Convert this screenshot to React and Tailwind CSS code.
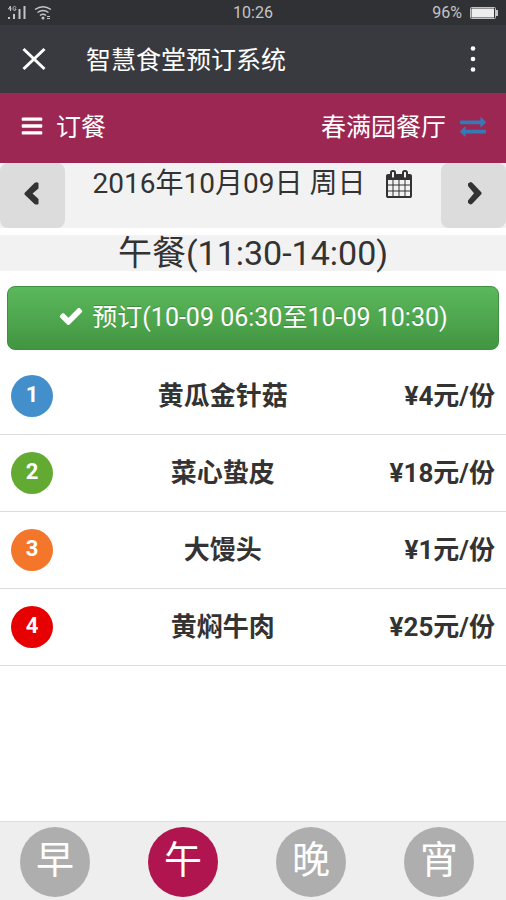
import React from "react";

const DISHES = [
  { name: "黄瓜金针菇", price: 4, badge: "bg-[#428fcc]" },
  { name: "菜心蛰皮", price: 18, badge: "bg-[#63aa33]" },
  { name: "大馒头", price: 1, badge: "bg-[#f4762a]" },
  { name: "黄焖牛肉", price: 25, badge: "bg-[#e60000]" },
];

const MEALS = ["早", "午", "晚", "宵"];

function Icon({ d, className }) {
  return (
    <svg viewBox="0 0 1792 1792" fill="currentColor" aria-hidden="true" className={className}>
      <path d={d} />
    </svg>
  );
}

const BARS =
  "M1664 1344v128q0 26-19 45t-45 19H192q-26 0-45-19t-19-45v-128q0-26 19-45t45-19h1408q26 0 45 19t19 45zm0-512v128q0 26-19 45t-45 19H192q-26 0-45-19t-19-45V832q0-26 19-45t45-19h1408q26 0 45 19t19 45zm0-512v128q0 26-19 45t-45 19H192q-26 0-45-19t-19-45V320q0-26 19-45t45-19h1408q26 0 45 19t19 45z";
const EXCHANGE =
  "M1792 1184v192q0 13-9.5 22.5t-22.5 9.5H384v192q0 13-9.5 22.5T352 1633q-12 0-24-10L9 1303q-9-9-9-22 0-14 9-23l320-320q9-9 23-9 13 0 22.5 9.5t9.5 22.5v192h1376q13 0 22.5 9.5t9.5 22.5zm0-544q0 14-9 23l-320 320q-9 9-23 9-13 0-22.5-9.5T1408 960V768H32q-13 0-22.5-9.5T0 736V544q0-13 9.5-22.5T32 512h1376V320q0-14 9-23t23-9q12 0 24 10l319 319q9 9 9 23z";
const CALENDAR =
  "M192 1664h288v-288h-288v288zm352 0h320v-288h-320v288zm-352-352h288v-320h-288v320zm352 0h320v-320h-320v320zm-352-384h288v-288h-288v288zm736 736h320v-288h-320v288zm-384-736h320v-288h-320v288zm768 736h288v-288h-288v288zm-384-352h320v-320h-320v320zm-352-864v-288q0-13-9.5-22.5t-22.5-9.5h-64q-13 0-22.5 9.5t-9.5 22.5v288q0 13 9.5 22.5t22.5 9.5h64q13 0 22.5-9.5t9.5-22.5zm736 864h288v-320h-288v320zm-384-384h320v-288h-320v288zm384 0h288v-288h-288v288zm32-480v-288q0-13-9.5-22.5t-22.5-9.5h-64q-13 0-22.5 9.5t-9.5 22.5v288q0 13 9.5 22.5t22.5 9.5h64q13 0 22.5-9.5t9.5-22.5zm384-64v1280q0 52-38 90t-90 38h-1408q-52 0-90-38t-38-90v-1280q0-52 38-90t90-38h128v-96q0-66 47-113t113-47h64q66 0 113 47t47 113v96h384v-96q0-66 47-113t113-47h64q66 0 113 47t47 113v96h128q52 0 90 38t38 90z";
const CHECK =
  "M1671 566q0 40-28 68l-724 724-136 136q-28 28-68 28t-68-28l-136-136-362-362q-28-28-28-68t28-68l136-136q28-28 68-28t68 28l294 295 656-657q28-28 68-28t68 28l136 136q28 28 28 68z";

function StatusBar() {
  return (
    <div className="grid h-[25px] grid-cols-3 items-center bg-[#303135] px-2 text-base text-[#c4c4c6]">
      <div className="flex items-center gap-2">
        <svg viewBox="0 0 18 16" className="h-4 w-[18px]" fill="none" stroke="currentColor" aria-hidden="true">
          <path strokeWidth="1" d="M2.5 6V1L.5 4h3M8 2.5C7.500 1 5 .8 5 3.500S8 6 8 4H6.500" />
          <path strokeWidth="2" d="M1 12v2M6 9v5M11.500 4v10M16.500 1v13" />
        </svg>
        <svg viewBox="0 0 18 16" className="h-4 w-[18px]" fill="none" stroke="currentColor" aria-hidden="true">
          <path strokeWidth="1.500" d="M1 4.500Q9-1 17 4.500M3.500 7.500Q9 3.500 14.500 7.500M6 10.500Q9 8 12 10.500" />
          <circle cx="9" cy="13" r="1.500" fill="currentColor" stroke="none" />
          <path strokeWidth="1" d="M13 11.500h3M13 13.500h3" />
        </svg>
      </div>
      <span className="text-center">10:26</span>
      <div className="flex items-center justify-end gap-2">
        <span>96%</span>
        <svg viewBox="0 0 28 12" className="h-3 w-7" aria-hidden="true">
          <rect x=".5" y=".5" width="25" height="11" rx="1" fill="none" stroke="#c4c4c6" />
          <rect x="1.500" y="1.500" width="22.500" height="9" fill="#ededed" />
          <rect x="26" y="3" width="2" height="6" fill="#c4c4c6" />
        </svg>
      </div>
    </div>
  );
}

function TitleBar() {
  return (
    <header className="flex h-[68px] items-center bg-[#393a3f] px-[22px] text-white">
      <button type="button" aria-label="关闭">
        <svg viewBox="0 0 24 24" className="h-6 w-6" stroke="currentColor" strokeWidth="3" aria-hidden="true">
          <path d="M1.500 2l21 20M22.500 2l-21 20" />
        </svg>
      </button>
      <h1 className="ml-10 flex-1 pt-[3px] text-[25px] leading-8">智慧食堂预订系统</h1>
      <button type="button" aria-label="更多" className="px-2">
        <svg viewBox="0 0 6 28" className="h-7 w-[6px]" fill="currentColor" aria-hidden="true">
          <circle cx="3" cy="3.500" r="2.300" />
          <circle cx="3" cy="14" r="2.300" />
          <circle cx="3" cy="24.500" r="2.300" />
        </svg>
      </button>
    </header>
  );
}

function StepButton({ label, d }) {
  return (
    <button
      type="button"
      aria-label={label}
      className="flex w-[65px] items-center justify-center rounded-lg bg-[#dcdcdc] pb-[6px]"
    >
      <svg viewBox="0 0 24 24" className="h-6 w-6" fill="currentColor" aria-hidden="true">
        <path d={d} />
      </svg>
    </button>
  );
}

export default function App() {
  return (
    <div className="flex min-h-screen flex-col bg-white font-['Roboto','Noto_Sans_CJK_SC',sans-serif] text-[#333]">
      <StatusBar />
      <TitleBar />

      <nav className="flex h-[70px] items-center justify-between bg-[#9c2752] px-5 pb-1 text-[25px] leading-8 text-white">
        <button type="button" className="flex items-center gap-3">
          <Icon d={BARS} className="h-6 w-6" />
          <span className="pt-[3px]">订餐</span>
        </button>
        <button type="button" className="flex items-center gap-[14px]">
          <span className="pt-[3px]">春满园餐厅</span>
          <Icon d={EXCHANGE} className="h-[26px] w-[26px] text-[#337ab7]" />
        </button>
      </nav>

      <div className="flex h-[65px] justify-between bg-[#f2f2f2]">
        <StepButton label="前一天" d="M17.500 2v5.500l-6 5 6 5.500v5q-2 1-4 0L3.500 13.500V12L13.500 2q2-1.500 4 0z" />
        <button type="button" className="flex items-center gap-5 self-start pt-[5px] text-[28px] leading-8">
          2016年10月09日 周日
          <Icon d={CALENDAR} className="h-7 w-7" />
        </button>
        <StepButton label="后一天" d="M6 2.500L8.500 1q1 0 2 1l9 9.500V13l-9 9.500q-1 1-2 1L6 22v-2.500l6-7.250L6 5z" />
      </div>

      <h2 className="mt-[7px] bg-[#f2f2f2] text-center text-[34px] leading-9">午餐(11:30-14:00)</h2>

      <main className="flex-1">
        <div className="px-[7px] pt-[15px] pb-2">
          <button
            type="button"
            className="flex h-16 w-full items-center justify-center gap-2 rounded-lg border border-[#3e8f3e] bg-linear-to-b from-[#5cb85c] to-[#419641] pb-1 text-[25px] text-white text-shadow-[0_-1px_0_rgb(0_0_0/0.2)]"
          >
            <Icon d={CHECK} className="h-[26px] w-[26px]" />
            <span className="pt-[3px]">预订(10-09 06:30至10-09 10:30)</span>
          </button>
        </div>

        <ul>
          {DISHES.map((dish, i) => (
            <li
              key={dish.name}
              className="grid h-[77px] grid-cols-[1fr_5fr_2fr] items-center border-b border-[#ddd] px-[11px] text-[26px] font-bold"
            >
              <span
                className={`flex h-[42px] w-[42px] items-center justify-center rounded-full pb-1 text-[22px] text-white ${dish.badge}`}
              >
                {i + 1}
              </span>
              <span className="text-center">{dish.name}</span>
              <span className="text-right whitespace-nowrap">¥{dish.price}元/份</span>
            </li>
          ))}
        </ul>
      </main>

      <footer className="flex justify-between border-t border-[#ddd] bg-[#eee] pt-[5px] pr-8 pb-[3px] pl-5">
        {MEALS.map((meal) => (
          <button
            key={meal}
            type="button"
            className={`h-[70px] w-[70px] rounded-full pb-1 text-[38px] leading-none text-white ${
              meal === "午" ? "bg-[#b0154f]" : "bg-[#aeaeae]"
            }`}
          >
            {meal}
          </button>
        ))}
      </footer>
    </div>
  );
}
